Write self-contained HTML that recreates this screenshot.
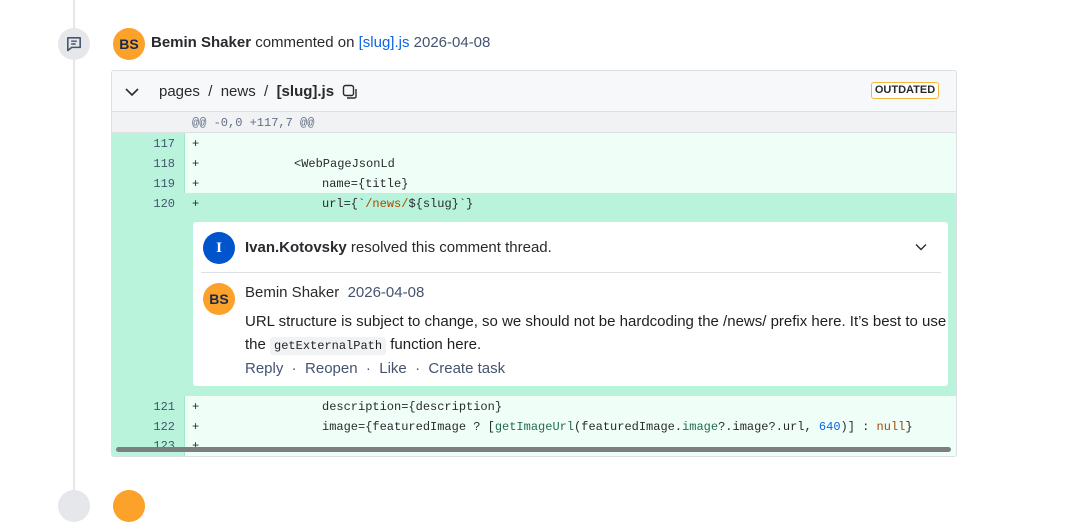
<!DOCTYPE html>
<html><head><meta charset="utf-8"><style>
body{margin:0;width:1074px;height:498px;background:#fff;position:relative;overflow:hidden;font-family:"Liberation Sans",sans-serif;color:#292a2e}
.a{position:absolute}
.mono{font-family:"Liberation Mono",monospace;font-size:12px;color:#292a2e}
.ln{position:absolute;left:112px;width:63px;text-align:right;font-family:"Liberation Mono",monospace;font-size:12px;color:#44546f}
.pl{position:absolute;left:192px;font-family:"Liberation Mono",monospace;font-size:12px}
.av{position:absolute;width:32px;height:32px;border-radius:50%;background:#fca12a;color:#172b4d;font-weight:bold;font-size:14px;text-align:center;line-height:32px}
</style></head><body>
<div class="a" style="left:73px;top:0;width:2px;height:498px;background:#e4e6ea"></div>
<div class="a" style="left:58px;top:28px;width:32px;height:32px;border-radius:50%;background:#e6e7ea"></div>
<svg class="a" style="left:65px;top:35px" width="18" height="18" viewBox="0 0 16 16"><path d="M2.5 2.5h11v8.5H6l-3.5 2.8z" fill="none" stroke="#44546f" stroke-width="1.4" stroke-linejoin="round"/><path d="M5.5 5.5h5M5.5 8h4" stroke="#44546f" stroke-width="1.3"/></svg>
<div class="av" style="left:113px;top:28px">BS</div>
<div class="a" style="left:151px;top:34px;font-size:15px"><b>Bemin Shaker</b> commented on <span style="color:#0c66e4">[slug].js</span> <span style="color:#44546f">2026-04-08</span></div>

<div class="a" style="left:111px;top:70px;width:844px;height:385px;border:1px solid #dcdfe4;border-radius:3px;overflow:hidden;background:#effff7">
 <div class="a" style="left:0;top:0;width:844px;height:40px;background:#f7f8f9;border-bottom:1px solid #dcdfe4"></div>
 <div class="a" style="left:0;top:41px;width:844px;height:20px;background:#f1f2f4;border-bottom:1px solid #dcdfe4"></div>
 <div class="a" style="left:0;top:62px;width:72px;height:323px;background:#baf3db;border-right:1px solid #a5e6c8"></div>
 <div class="a" style="left:72px;top:122px;width:772px;height:203px;background:#baf3db"></div>
</div>
<svg class="a" style="left:124px;top:86px" width="16" height="12" viewBox="0 0 16 12"><path d="M2 3l6 6 6-6" fill="none" stroke="#292a2e" stroke-width="1.6"/></svg>
<div class="a" style="left:159px;top:83px;font-size:15px">pages &nbsp;/ &nbsp;news &nbsp;/ &nbsp;<b>[slug].js</b></div>
<svg class="a" style="left:342px;top:84px" width="16" height="16" viewBox="0 0 16 16"><rect x="1.5" y="1.5" width="10" height="10" rx="2" fill="none" stroke="#292a2e" stroke-width="1.4"/><path d="M14 5v7.5a1.5 1.5 0 0 1-1.5 1.5H5" fill="none" stroke="#292a2e" stroke-width="1.4"/></svg>
<div class="a" style="left:871px;top:82px;width:66px;text-align:center;border:1px solid #f5b73b;border-radius:3px;font-size:11px;font-weight:bold;line-height:15px;color:#292a2e;background:#fff">OUTDATED</div>
<div class="a mono" style="left:192px;top:116px;color:#626f86">@@ -0,0 +117,7 @@</div>

<div class="ln" style="top:137px">117</div><div class="pl" style="top:137px">+</div>
<div class="ln" style="top:157px">118</div><div class="pl" style="top:157px">+</div><div class="a mono" style="left:294px;top:157px">&lt;WebPageJsonLd</div>
<div class="ln" style="top:177px">119</div><div class="pl" style="top:177px">+</div><div class="a mono" style="left:322px;top:177px">name={title}</div>
<div class="ln" style="top:197px">120</div><div class="pl" style="top:197px">+</div><div class="a mono" style="left:322px;top:197px">url={`<span style="color:#a54800">/news/</span>${slug}`}</div>
<div class="ln" style="top:400px">121</div><div class="pl" style="top:400px">+</div><div class="a mono" style="left:322px;top:400px">description={description}</div>
<div class="ln" style="top:420px">122</div><div class="pl" style="top:420px">+</div><div class="a mono" style="left:322px;top:420px">image={featuredImage ? [<span style="color:#216e4e">getImageUrl</span>(featuredImage.<span style="color:#216e4e">image</span>?.image?.url, <span style="color:#0c66e4">640</span>)] : <span style="color:#a54800">null</span>}</div>
<div class="ln" style="top:439px">123</div><div class="pl" style="top:439px">+</div>
<div class="a" style="left:116px;top:447px;width:835px;height:5px;border-radius:3px;background:#7b807e"></div>

<div class="a" style="left:193px;top:222px;width:755px;height:164px;background:#fff;border-radius:3px"></div>
<div class="av" style="left:203px;top:232px;background:#0055cc;color:#fff;font-family:'Liberation Serif',serif;font-size:15px">I</div>
<div class="a" style="left:245px;top:239px;font-size:15px"><b>Ivan.Kotovsky</b> resolved this comment thread.</div>
<svg class="a" style="left:914px;top:242px" width="14" height="10" viewBox="0 0 14 10"><path d="M2 2.5l5 5 5-5" fill="none" stroke="#292a2e" stroke-width="1.4"/></svg>
<div class="a" style="left:201px;top:272px;width:740px;height:1px;background:#dcdfe4"></div>
<div class="av" style="left:203px;top:283px">BS</div>
<div class="a" style="left:245px;top:284px;font-size:15px"><span>Bemin Shaker</span>&nbsp; <span style="color:#44546f">2026-04-08</span></div>
<div class="a" style="left:245px;top:310px;font-size:15px;line-height:23px;width:720px;color:#1e1f21">URL structure is subject to change, so we should not be hardcoding the /news/ prefix here. It’s best to use the <span style="font-family:'Liberation Mono',monospace;font-size:12px;background:#f1f2f4;border-radius:3px;padding:2px 4px">getExternalPath</span> function here.</div>
<div class="a" style="left:245px;top:360px;font-size:15px;color:#44546f">Reply &nbsp;·&nbsp; Reopen &nbsp;·&nbsp; Like &nbsp;·&nbsp; Create task</div>

<div class="a" style="left:58px;top:490px;width:32px;height:32px;border-radius:50%;background:#e6e7ea"></div>
<div class="av" style="left:113px;top:490px"></div>
</body></html>
